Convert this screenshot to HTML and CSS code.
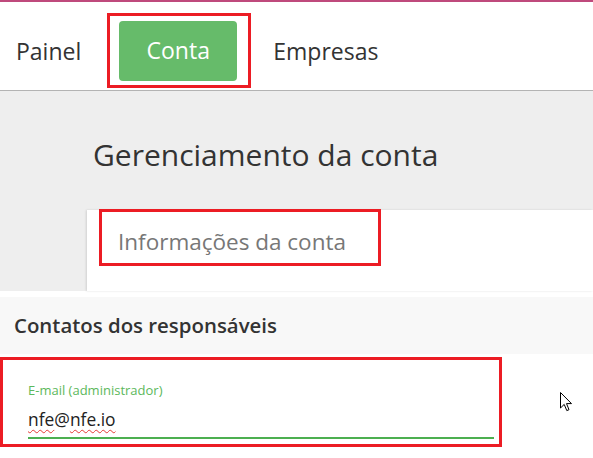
FILE: index.html
```html
<!DOCTYPE html>
<html lang="pt-BR">
<head>
<meta charset="utf-8">
<title>Gerenciamento da conta</title>
<link rel="stylesheet" href="styles.css">
</head>
<body>
<div class="topline"></div>
<nav class="nav">
  <a class="nav-item">Painel</a>
  <div class="mark mark-nav"><a class="nav-item active">Conta</a></div>
  <a class="nav-item">Empresas</a>
</nav>
<section class="hero">
  <h1 class="title">Gerenciamento da conta</h1>
  <div class="card">
    <div class="mark mark-tab"><span class="tab">Informações da conta</span></div>
  </div>
</section>
<div class="section-head">Contatos dos responsáveis</div>
<div class="mark mark-field">
  <div class="field">
    <label class="field-label">E-mail (administrador)</label>
    <div class="field-value"><span class="spell">nfe</span>@<span class="spell">nfe.io</span></div>
  </div>
</div>
<svg class="cursor" width="13" height="20" viewBox="0 0 13 20"><path d="M0.5 0.5 L0.5 16 L4.2 12.4 L6.8 18.6 L9 17.7 L6.5 11.6 L11.5 11.6 Z" fill="#fff" stroke="#000" stroke-width="1" stroke-linejoin="miter"/></svg>
</body>
</html>
```
FILE: styles.css
```css
html, body {
  margin: 0;
  padding: 0;
  background: #fff;
  overflow: hidden;
}
body {
  font-family: "Open Sans", "Noto Sans", sans-serif;
  color: #333;
  width: 593px;
  height: 458px;
  position: relative;
}
.topline {
  height: 2px;
  background: #bf4a7c;
}
.nav {
  height: 88px;
  display: flex;
  align-items: center;
  padding-left: 16px;
  border-bottom: 1px solid #b3b3b3;
  box-shadow: 0 1px 1px rgba(0,0,0,0.08);
}
.nav-item {
  font-size: 23px;
  color: #333;
  text-decoration: none;
  margin-top: 9px;
}
.mark {
  border: 3px solid #ec1c24;
  box-sizing: border-box;
}
.mark-nav {
  margin: 8px 22px 0 26px;
  width: 144px;
  height: 75px;
  padding: 5px 11px 4px 9px;
}
.nav-item.active {
  display: flex;
  align-items: center;
  justify-content: center;
  height: 60px;
  margin-top: 0;
  padding-bottom: 1px;
  box-sizing: border-box;
  background: #66bb6a;
  color: #fff;
  border-radius: 4px;
}
.hero {
  background: #eeeeee;
  height: 200px;
  padding-left: 87px;
  box-sizing: border-box;
  display: flex;
  flex-direction: column;
}
.title {
  margin: 43px 0 35px 6px;
  font-size: 30px;
  font-weight: 400;
  color: #333;
}
.card {
  background: #fff;
  height: 81px;
  box-shadow: -1px 0 2px rgba(0,0,0,0.12);
  padding-left: 12px;
}
.mark-tab {
  width: 282px;
  height: 57px;
  margin-top: -1px;
  padding: 14px 0 0 16px;
}
.tab {
  font-size: 22.5px;
  color: #777;
}
.section-head {
  margin-top: 6px;
  height: 57px;
  box-sizing: border-box;
  padding: 14px 0 0 14px;
  background: #f8f8f8;
  font-size: 20.4px;
  font-weight: 600;
  color: #333;
}
.mark-field {
  margin-top: 3px;
  width: 502px;
  height: 90px;
  padding: 21px 5px 0 25px;
}
.field {
  display: flex;
  flex-direction: column;
}
.field-label {
  font-size: 13px;
  color: #5cb85c;
  line-height: 18px;
}
.field-value {
  margin-top: 9px;
  font-size: 17.4px;
  line-height: 23px;
  color: #222;
  padding-bottom: 6px;
  border-bottom: 2px solid #4caf50;
}
.spell {
  text-decoration: underline wavy #e53935;
  text-decoration-thickness: 1px;
  text-underline-offset: 3px;
}
.cursor {
  position: absolute;
  left: 560px;
  top: 392px;
}
```
